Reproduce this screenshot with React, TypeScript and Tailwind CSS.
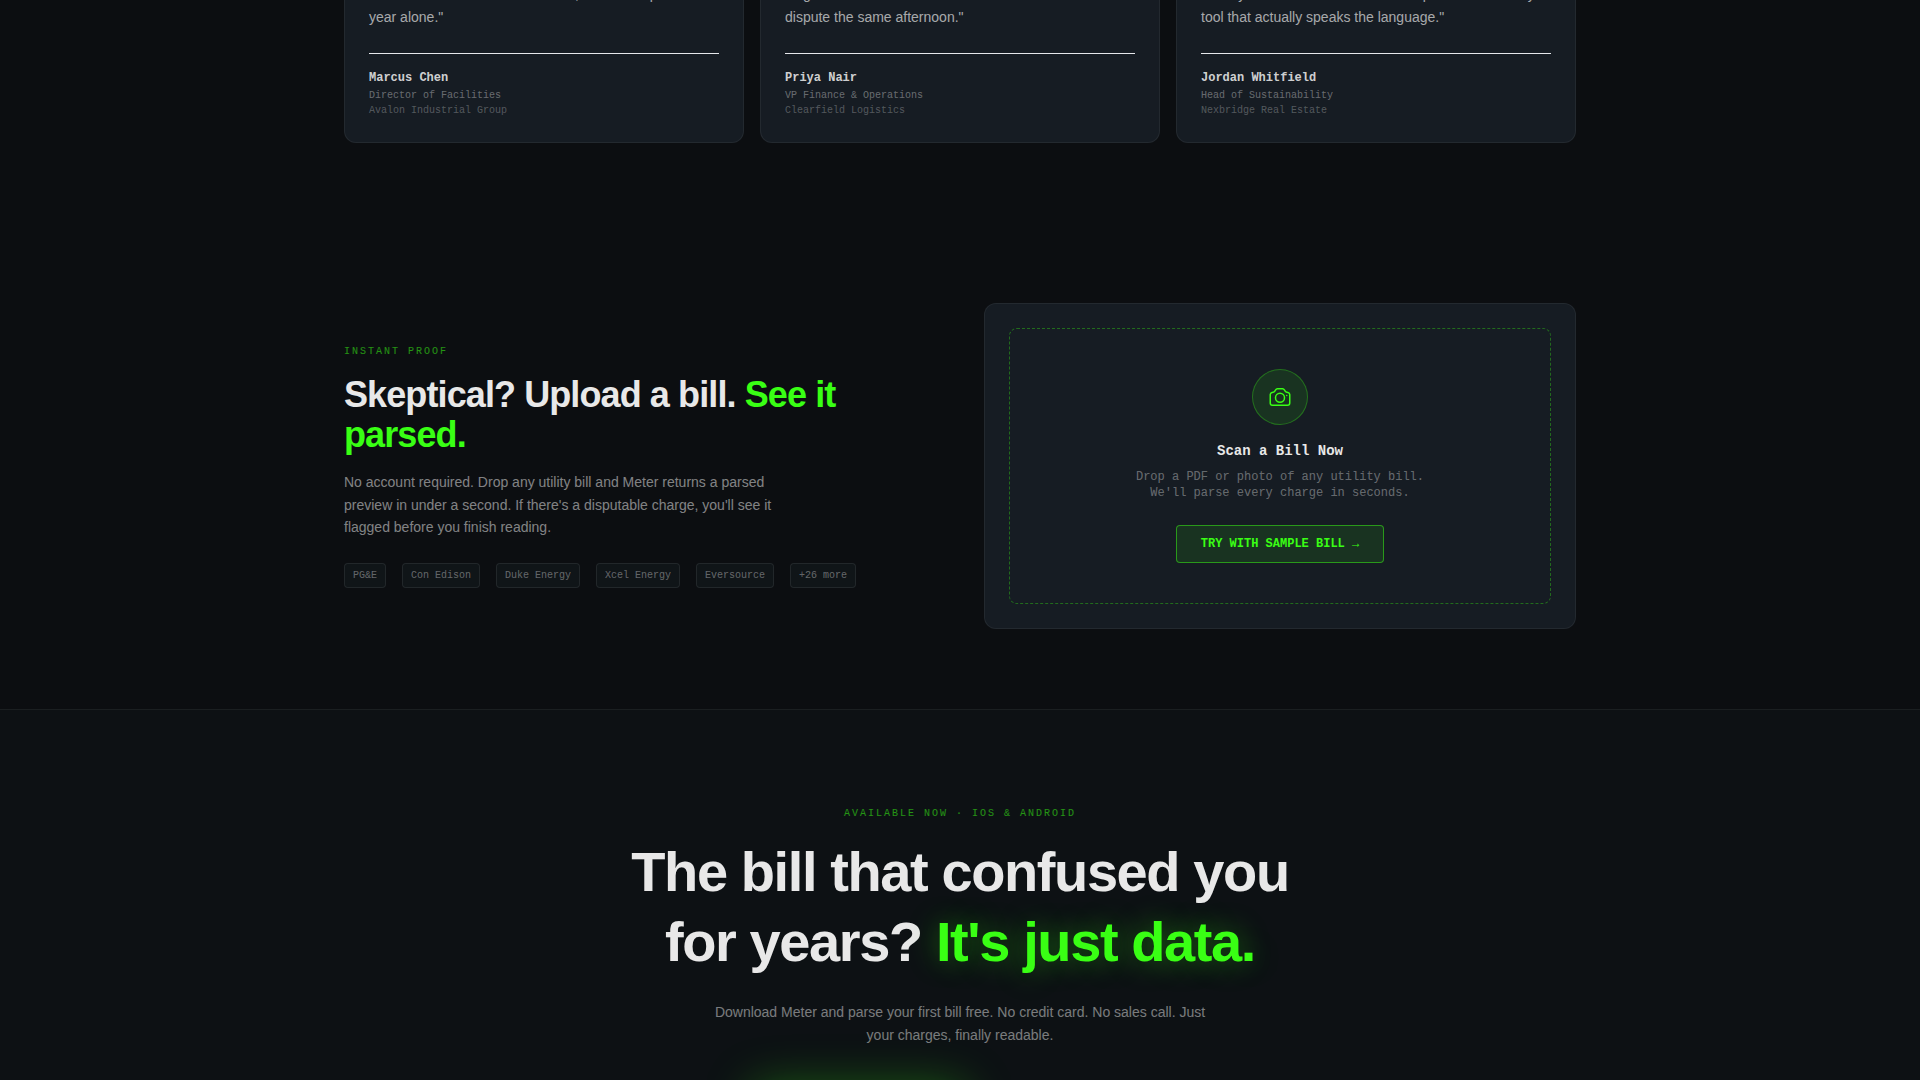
import { HiOutlineCamera } from 'react-icons/hi2'

const testimonials = [
  {
    quote: ['We recovered nineteen thousand, and it was paid in', 'year alone."'],
    name: 'Marcus Chen',
    role: 'Director of Facilities',
    company: 'Avalon Industrial Group',
  },
  {
    quote: ['Regional rates were off and we filed the', 'dispute the same afternoon."'],
    name: 'Priya Nair',
    role: 'VP Finance & Operations',
    company: 'Clearfield Logistics',
  },
  {
    quote: ['directly from the meter and it was a platform with daily', 'tool that actually speaks the language."'],
    name: 'Jordan Whitfield',
    role: 'Head of Sustainability',
    company: 'Nexbridge Real Estate',
  },
]

const utilities = ['PG&E', 'Con Edison', 'Duke Energy', 'Xcel Energy', 'Eversource', '+26 more']

const mono = "font-['Liberation_Mono',monospace]"

function Testimonials() {
  return (
    <section className="mx-auto -mt-[17px] grid max-w-7xl grid-cols-3 gap-4 px-6 pb-20">
      {testimonials.map(({ quote, name, role, company }) => (
        <figure key={name} className="rounded-b-xl border border-t-0 border-white/6 bg-[#161c23] px-6 pb-6">
          <blockquote className="mb-6 text-sm leading-[23px] whitespace-nowrap text-[#e8e8e8]/70">
            {quote[0]}
            <br />
            {quote[1]}
          </blockquote>
          <figcaption className={`${mono} border-t border-gray-200 pt-4`}>
            <div className="text-xs font-bold text-[#e8e8e8]/90">{name}</div>
            <div className="mt-0.5 text-[10px] leading-[15px] text-[#e8e8e8]/40">{role}</div>
            <div className="text-[10px] leading-[15px] text-[#e8e8e8]/30">{company}</div>
          </figcaption>
        </figure>
      ))}
    </section>
  )
}

function InstantProof() {
  return (
    <section className="mx-auto grid max-w-7xl grid-cols-2 items-center gap-12 px-6 py-20">
      <div>
        <p className={`${mono} mb-4 text-[10px] leading-[15px] tracking-[0.2em] text-[#39ff14]/55 uppercase`}>
          Instant Proof
        </p>
        <h2 className="mb-4 text-4xl font-bold tracking-tight">
          Skeptical? Upload a bill. <span className="text-[#39ff14]">See it parsed.</span>
        </h2>
        <p className="mb-6 max-w-md text-sm leading-relaxed text-[#e8e8e8]/55">
          No account required. Drop any utility bill and Meter returns a parsed preview in under a second. If there's a
          disputable charge, you'll see it flagged before you finish reading.
        </p>
        <ul className={`${mono} flex flex-wrap gap-4`}>
          {utilities.map((utility) => (
            <li
              key={utility}
              className="rounded-sm border border-white/8 bg-[#101518] px-2 py-1 text-[10px] leading-[15px] text-[#e8e8e8]/40"
            >
              {utility}
            </li>
          ))}
        </ul>
      </div>

      <div className="rounded-xl border border-white/6 bg-[#161c23] p-6">
        <div className={`${mono} flex flex-col items-center rounded-lg border border-dashed border-[#39ff14]/35 p-10 text-center`}>
          <div className="mb-4 flex size-14 items-center justify-center rounded-full border border-[#39ff14]/30 bg-[#39ff14]/10">
            <HiOutlineCamera className="size-6 text-[#39ff14]" />
          </div>
          <h3 className="mb-2 text-sm font-bold">Scan a Bill Now</h3>
          <p className="mb-6 text-xs text-[#e8e8e8]/40">
            Drop a PDF or photo of any utility bill.
            <br />
            We'll parse every charge in seconds.
          </p>
          <button
            type="button"
            className="rounded-sm border border-[#39ff14]/50 bg-[#39ff14]/10 px-6 py-2.5 text-xs font-bold text-[#39ff14] uppercase"
          >
            Try with sample bill →
          </button>
        </div>
      </div>
    </section>
  )
}

function Download() {
  return (
    <section className="border-t border-white/6 bg-[#0d1114] px-6 py-24 text-center">
      <p className={`${mono} mb-4 text-[10px] leading-[15px] tracking-[0.2em] text-[#39ff14]/55 uppercase`}>
        Available now · iOS & Android
      </p>
      <h2 className="mx-auto mb-6 max-w-3xl text-[56px] leading-tight font-bold tracking-tight">
        The bill that confused you
        <br />
        for years?{' '}
        <span className="text-[#39ff14] [text-shadow:0_0_30px_rgba(57,255,20,0.4)]">It's just data.</span>
      </h2>
      <p className="mx-auto mb-10 max-w-lg text-sm leading-relaxed text-[#e8e8e8]/50">
        Download Meter and parse your first bill free. No credit card. No sales call. Just your charges, finally
        readable.
      </p>
      <div className="mx-auto flex w-[414px]">
        <div className="h-12 w-[212px] rounded-sm bg-[#39ff14] shadow-[0_0_48px_rgba(57,255,20,0.35)]" />
      </div>
    </section>
  )
}

export default function App() {
  return (
    <main className="h-screen overflow-hidden bg-[#0c0e11] font-['Liberation_Sans',Arial,sans-serif] text-[#e8e8e8]">
      <Testimonials />
      <InstantProof />
      <Download />
    </main>
  )
}
